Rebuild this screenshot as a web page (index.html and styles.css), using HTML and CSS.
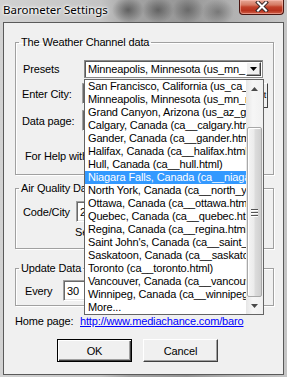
FILE: index.html
```html
<!DOCTYPE html>
<html>
<head>
<meta charset="utf-8">
<link rel="stylesheet" href="styles.css">
</head>
<body>
<div class="window">
  <div class="titlebar">
    <span class="title">Barometer Settings</span>
    <div class="close">
      <svg width="16" height="11" viewBox="0 0 16 11"><path d="M4 1.5 L12 9.5 M12 1.5 L4 9.5" stroke="#3a2a2a" stroke-width="4" stroke-linecap="square" fill="none"/><path d="M4 1.5 L12 9.5 M12 1.5 L4 9.5" stroke="#ffffff" stroke-width="2" stroke-linecap="square" fill="none"/></svg>
    </div>
  </div>
  <div class="client">
    <fieldset class="group weather">
      <legend>The Weather Channel data</legend>
      <div class="row r1"><span class="lbl w61">Presets</span>
        <div class="combo"><span class="combo-text">Minneapolis, Minnesota (us_mn_</span><span class="combo-btn"><svg width="7" height="4" viewBox="0 0 7 4"><path d="M0 0H7L3.5 4Z" fill="#000"/></svg></span></div>
      </div>
      <div class="row r2"><span class="lbl w60">Enter City:</span><div class="edit e-city"></div><div class="pbtn">Get</div></div>
      <div class="row r3"><span class="lbl w60">Data page:</span><div class="edit e-page"></div></div>
      <div class="help">For Help with the data page see the web site</div>
    </fieldset>
    <fieldset class="group air">
      <legend>Air Quality Data</legend>
      <div class="row r4"><span class="lbl w53">Code/City</span><div class="edit e-code"><span class="val">24</span></div></div>
      <div class="see">See airnow.gov for codes</div>
    </fieldset>
    <fieldset class="group update">
      <legend>Update Data</legend>
      <div class="row r5"><span class="lbl w38">Every</span><div class="edit e-every"><span class="val">30</span></div><span class="min">minutes</span></div>
    </fieldset>
    <div class="home"><span class="hlbl">Home page:</span><a class="link" href="#">http://www.mediachance.com/baro</a></div>
    <div class="buttons"><div class="btn default">OK</div><div class="btn cancel">Cancel</div></div>

    <div class="droplist">
      <div class="items">
        <div class="item">San Francisco, California (us_ca_san_francisco.html)</div>
        <div class="item">Minneapolis, Minnesota (us_mn_minneapolis.html)</div>
        <div class="item">Grand Canyon, Arizona (us_az_grand_canyon.html)</div>
        <div class="item">Calgary, Canada (ca__calgary.html)</div>
        <div class="item">Gander, Canada (ca__gander.html)</div>
        <div class="item">Halifax, Canada (ca__halifax.html)</div>
        <div class="item">Hull, Canada (ca__hull.html)</div>
        <div class="item sel">Niagara Falls, Canada (ca__niagara_falls.html)</div>
        <div class="item">North York, Canada (ca__north_york.html)</div>
        <div class="item">Ottawa, Canada (ca__ottawa.html)</div>
        <div class="item">Quebec, Canada (ca__quebec.html)</div>
        <div class="item">Regina, Canada (ca__regina.html)</div>
        <div class="item">Saint John's, Canada (ca__saint_johns.html)</div>
        <div class="item">Saskatoon, Canada (ca__saskatoon.html)</div>
        <div class="item">Toronto (ca__toronto.html)</div>
        <div class="item">Vancouver, Canada (ca__vancouver.html)</div>
        <div class="item">Winnipeg, Canada (ca__winnipeg.html)</div>
        <div class="item">More...</div>
      </div>
      <div class="sb">
        <div class="sb-arrow"><svg width="7" height="4" viewBox="0 0 7 4"><path d="M3.5 0L7 4H0Z" fill="#4a4a4a"/></svg></div>
        <div class="sb-track"></div>
        <div class="sb-thumb"><span class="grip"></span><span class="grip"></span><span class="grip"></span></div>
        <div class="sb-arrow"><svg width="7" height="4" viewBox="0 0 7 4"><path d="M0 0H7L3.5 4Z" fill="#4a4a4a"/></svg></div>
      </div>
    </div>
  </div>
</div>
</body>
</html>
```

FILE: styles.css
```css
html, body {
  margin: 0;
  padding: 0;
}
body {
  width: 287px;
  height: 377px;
  overflow: hidden;
  font-family: "Liberation Sans", Arial, sans-serif;
  font-size: 11px;
  letter-spacing: -0.15px;
  color: #000;
}
.window {
  width: 287px;
  height: 377px;
  background:
    radial-gradient(ellipse 16px 13px at 128px 10px, rgba(50,50,50,0.6), rgba(50,50,50,0) 100%),
    radial-gradient(ellipse 16px 13px at 158px 10px, rgba(50,50,50,0.55), rgba(50,50,50,0) 100%),
    radial-gradient(ellipse 16px 13px at 188px 10px, rgba(60,60,60,0.5), rgba(60,60,60,0) 100%),
    radial-gradient(ellipse 16px 13px at 218px 12px, rgba(60,60,60,0.45), rgba(60,60,60,0) 100%),
    linear-gradient(to right, #d2d2d2 0%, #c4c4c4 35%, #a4a4a4 45%, #969696 65%, #b0b0b0 80%, #c6c6c6 100%);
  display: flex;
  flex-direction: column;
}
.titlebar {
  height: 22px;
  display: flex;
  align-items: flex-start;
  justify-content: space-between;
}
.title {
  font-family: "Noto Sans", "Open Sans", sans-serif;
  font-size: 11.5px;
  letter-spacing: 0;
  line-height: 14px;
  margin: 3px 0 0 3px;
  color: #000;
  text-shadow: 0 0 4px #fff, 0 0 3px #fff, 0 0 2px #fff;
}
.close {
  width: 45px;
  height: 15px;
  margin-right: 3px;
  box-sizing: border-box;
  border: 1px solid #4a1510;
  border-top: none;
  border-radius: 0 0 4px 4px;
  background: linear-gradient(to bottom, #e8a897 0%, #d57a63 35%, #c2412a 50%, #b8321d 75%, #d0614a 100%);
  box-shadow: inset 0 0 0 1px rgba(255,200,190,0.5);
  display: flex;
  align-items: center;
  justify-content: center;
}
.close svg {
  display: block;
  margin-top: -1px;
}
.client {
  position: relative;
  margin-left: 3px;
  width: 281px;
  height: 353px;
  box-sizing: border-box;
  background: #f0f0f0;
  border: 1px solid #5a5a5a;
  display: flex;
  flex-direction: column;
  align-items: flex-start;
}
.group {
  margin: 0 0 0 11px;
  width: 259px;
  box-sizing: border-box;
  min-inline-size: 0;
  padding: 0 0 0 7px;
  border: 1px solid #a0a0a0;
  box-shadow: inset 1px 1px 0 #fff, 1px 1px 0 #fff;
}
.group legend {
  padding: 0 2px;
  margin-left: -4px;
  line-height: 13px;
  font-size: 11px;
}
.weather {
  margin-top: 13px;
  padding-bottom: 11px;
}
.air {
  margin-top: 7px;
  padding-bottom: 9px;
}
.update {
  margin-top: 13px;
  padding-bottom: 4px;
}
.row {
  display: flex;
  align-items: center;
  height: 21px;
}
.r1 { margin-top: 10px; height: 20px; }
.r2 { margin-top: 4px; }
.r3 { margin-top: 6px; }
.r4 { margin-top: 6px; }
.r5 { margin-top: 5px; margin-left: 2px; }
.lbl { flex: none; white-space: nowrap; }
.w61 { width: 61px; }
.w60 { width: 60px; margin-left: -1px; }
.w53 { width: 53px; }
.w38 { width: 38px; }
.combo {
  width: 179px;
  height: 18px;
  box-sizing: border-box;
  border: 1px solid #8a8a8a;
  box-shadow: inset 1px 1px 0 #5a5a5a;
  background: #fff;
  display: flex;
  align-items: center;
  overflow: hidden;
}
.combo-text {
  flex: 1;
  padding-left: 3px;
  white-space: nowrap;
  overflow: hidden;
}
.combo-btn {
  flex: none;
  width: 15px;
  height: 14px;
  margin-right: 1px;
  box-sizing: border-box;
  background: #f0f0f0;
  border: 1px solid;
  border-color: #fff #404040 #404040 #fff;
  box-shadow: inset -1px -1px 0 #a0a0a0;
  display: flex;
  align-items: center;
  justify-content: center;
}
.combo-btn svg { display: block; }
.edit {
  height: 21px;
  box-sizing: border-box;
  background: #fff;
  border: 1px solid;
  border-color: #a0a0a0 #fff #fff #a0a0a0;
  box-shadow: inset 1px 1px 0 #696969, inset -1px -1px 0 #e3e3e3;
  display: flex;
  align-items: center;
  flex: none;
}
.e-city { width: 165px; }
.e-page { width: 180px; }
.e-code { width: 120px; }
.e-every { width: 40px; }
.val { padding-left: 3px; }
.pbtn {
  flex: none;
  align-self: flex-start;
  width: 18px;
  height: 25px;
  margin-left: 3px;
  box-sizing: border-box;
  border: 1px solid;
  border-color: #fff #404040 #404040 #fff;
  background: #f0f0f0;
  font-size: 9px;
  line-height: 23px;
  text-align: center;
}
.min { margin-left: 6px; }
.help {
  margin-top: 19px;
  margin-left: 2px;
  line-height: 13px;
  white-space: nowrap;
}
.see {
  margin-top: 4px;
  margin-left: 52px;
  line-height: 13px;
  white-space: nowrap;
}
.home {
  margin: 9px 0 0 11px;
  line-height: 13px;
  display: flex;
  white-space: nowrap;
}
.hlbl { width: 65px; }
.link {
  color: #0000ff;
  text-decoration: underline;
}
.buttons {
  margin: 11px 0 0 53px;
  display: flex;
  gap: 11px;
}
.btn {
  width: 75px;
  height: 23px;
  box-sizing: border-box;
  background: #f0f0f0;
  display: flex;
  align-items: center;
  justify-content: center;
  border: 1px solid;
  border-color: #fff #404040 #404040 #fff;
  box-shadow: inset -1px -1px 0 #a0a0a0;
}
.btn.default {
  border: 1px solid #000;
  box-shadow: inset 1px 1px 0 #fff, inset -1px -1px 0 #404040, inset -2px -2px 0 #a0a0a0;
}
.droplist {
  position: absolute;
  left: 80px;
  top: 56px;
  width: 180px;
  height: 236px;
  box-sizing: border-box;
  border: 1px solid #646464;
  background: #fff;
  display: flex;
}
.items {
  width: 161px;
  flex: none;
  overflow: hidden;
}
.item {
  height: 13px;
  line-height: 13px;
  padding-left: 3px;
  white-space: nowrap;
  overflow: hidden;
}
.item.sel {
  background: #3399ff;
  color: #fff;
}
.sb {
  width: 17px;
  flex: none;
  display: flex;
  flex-direction: column;
  background: linear-gradient(to right, #e6e6e6, #f6f6f6 40%, #f0f0f0);
}
.sb-arrow {
  height: 17px;
  flex: none;
  display: flex;
  align-items: center;
  justify-content: center;
}
.sb-arrow svg { display: block; }
.sb-track {
  height: 30px;
  flex: none;
}
.sb-thumb {
  height: 170px;
  flex: none;
  margin: 0 1px;
  box-sizing: border-box;
  border: 1px solid #a8a8a8;
  border-radius: 2px;
  background: linear-gradient(to right, #f4f4f4 0%, #ececec 45%, #dcdcdc 55%, #cfcfcf 100%);
  box-shadow: inset 1px 1px 0 #fff;
  display: flex;
  flex-direction: column;
  align-items: center;
  justify-content: center;
  gap: 2px;
}
.grip {
  width: 7px;
  height: 1px;
  background: #555;
  box-shadow: 0 1px 0 #fff;
}
```
